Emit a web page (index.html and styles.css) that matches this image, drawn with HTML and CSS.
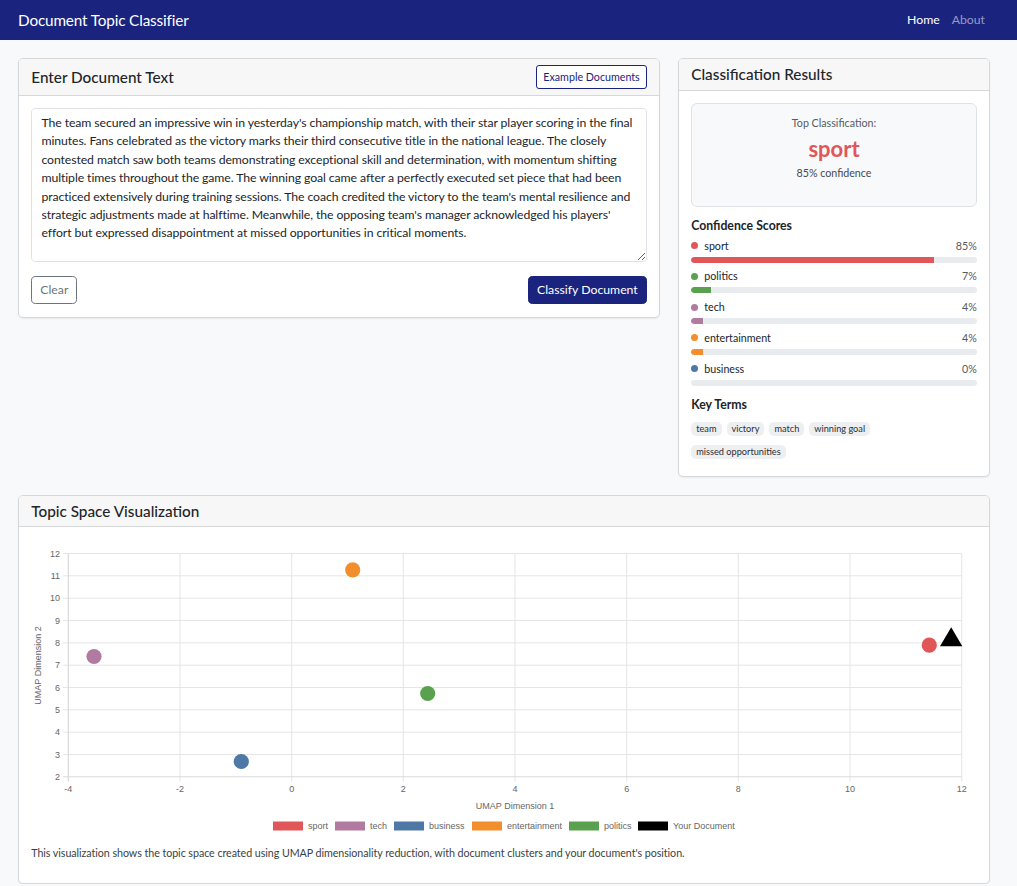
FILE: index.html
```html
<!DOCTYPE html>
<html lang="en">
<head>
<meta charset="utf-8">
<title>Document Topic Classifier</title>
<link rel="stylesheet" href="styles.css">
</head>
<body>
<nav class="navbar">
  <span class="brand">Document Topic Classifier</span>
  <div class="nav-links">
    <a class="nav-link active">Home</a>
    <a class="nav-link">About</a>
  </div>
</nav>
<main class="main">
  <div class="top-row">
    <section class="card">
      <div class="card-header tall">
        <h5 class="card-title">Enter Document Text</h5>
        <button class="btn-sm-outline">Example Documents</button>
      </div>
      <div class="card-body">
        <textarea class="doc-input" rows="8">The team secured an impressive win in yesterday's championship match, with their star player scoring in the final minutes. Fans celebrated as the victory marks their third consecutive title in the national league. The closely contested match saw both teams demonstrating exceptional skill and determination, with momentum shifting multiple times throughout the game. The winning goal came after a perfectly executed set piece that had been practiced extensively during training sessions. The coach credited the victory to the team's mental resilience and strategic adjustments made at halftime. Meanwhile, the opposing team's manager acknowledged his players' effort but expressed disappointment at missed opportunities in critical moments.</textarea>
        <div class="actions">
          <button class="btn btn-clear">Clear</button>
          <button class="btn btn-primary">Classify Document</button>
        </div>
      </div>
    </section>
    <section class="card">
      <div class="card-header">
        <h5 class="card-title">Classification Results</h5>
      </div>
      <div class="card-body">
        <div class="top-box">
          <p class="top-label">Top Classification:</p>
          <h3 class="top-class">sport</h3>
          <p class="top-conf">85% confidence</p>
        </div>
        <h6 class="sub-title">Confidence Scores</h6>
        <div class="scores">
          <div class="score">
            <div class="score-line"><span class="score-name"><i class="dot c-sport"></i>sport</span><span class="score-pct">85%</span></div>
            <div class="bar"><div class="fill c-sport" style="width:85%"></div></div>
          </div>
          <div class="score">
            <div class="score-line"><span class="score-name"><i class="dot c-politics"></i>politics</span><span class="score-pct">7%</span></div>
            <div class="bar"><div class="fill c-politics" style="width:7%"></div></div>
          </div>
          <div class="score">
            <div class="score-line"><span class="score-name"><i class="dot c-tech"></i>tech</span><span class="score-pct">4%</span></div>
            <div class="bar"><div class="fill c-tech" style="width:4%"></div></div>
          </div>
          <div class="score">
            <div class="score-line"><span class="score-name"><i class="dot c-ent"></i>entertainment</span><span class="score-pct">4%</span></div>
            <div class="bar"><div class="fill c-ent" style="width:4%"></div></div>
          </div>
          <div class="score">
            <div class="score-line"><span class="score-name"><i class="dot c-business"></i>business</span><span class="score-pct">0%</span></div>
            <div class="bar"><div class="fill c-business" style="width:0%"></div></div>
          </div>
        </div>
        <h6 class="sub-title terms-title">Key Terms</h6>
        <div class="tags">
          <span class="tag">team</span>
          <span class="tag">victory</span>
          <span class="tag">match</span>
          <span class="tag">winning goal</span>
          <span class="tag">missed opportunities</span>
        </div>
      </div>
    </section>
  </div>
  <section class="card viz-card">
    <div class="card-header">
      <h5 class="card-title">Topic Space Visualization</h5>
    </div>
    <div class="card-body">
      <svg class="chart" width="946" height="297" viewBox="0 1.5 946 297" xmlns="http://www.w3.org/2000/svg">
        <g class="grid" stroke="#e5e5e5" stroke-width="1">
          <line x1="37.3" y1="15" x2="37.3" y2="243"/>
          <line x1="149" y1="15" x2="149" y2="243"/>
          <line x1="260.7" y1="15" x2="260.7" y2="243"/>
          <line x1="372.3" y1="15" x2="372.3" y2="243"/>
          <line x1="484" y1="15" x2="484" y2="243"/>
          <line x1="595.7" y1="15" x2="595.7" y2="243"/>
          <line x1="707.3" y1="15" x2="707.3" y2="243"/>
          <line x1="819" y1="15" x2="819" y2="243"/>
          <line x1="930.7" y1="15" x2="930.7" y2="243"/>
          <line x1="32" y1="15" x2="930.7" y2="15"/>
          <line x1="32" y1="37.3" x2="930.7" y2="37.3"/>
          <line x1="32" y1="59.7" x2="930.7" y2="59.7"/>
          <line x1="32" y1="82" x2="930.7" y2="82"/>
          <line x1="32" y1="104.3" x2="930.7" y2="104.3"/>
          <line x1="32" y1="126.7" x2="930.7" y2="126.7"/>
          <line x1="32" y1="149" x2="930.7" y2="149"/>
          <line x1="32" y1="171.3" x2="930.7" y2="171.3"/>
          <line x1="32" y1="193.7" x2="930.7" y2="193.7"/>
          <line x1="32" y1="216" x2="930.7" y2="216"/>
        </g>
        <g stroke="#d9d9d9" stroke-width="1">
          <line x1="32" y1="238.3" x2="930.7" y2="238.3"/>
          <line x1="37.3" y1="15" x2="37.3" y2="243"/>
        </g>
        <g class="ticks" font-family="Liberation Sans, Arial, sans-serif" font-size="9" fill="#666" text-anchor="end">
          <text x="29" y="18.2">12</text>
          <text x="29" y="40.5">11</text>
          <text x="29" y="62.9">10</text>
          <text x="29" y="85.2">9</text>
          <text x="29" y="107.5">8</text>
          <text x="29" y="129.9">7</text>
          <text x="29" y="152.2">6</text>
          <text x="29" y="174.5">5</text>
          <text x="29" y="196.9">4</text>
          <text x="29" y="219.2">3</text>
          <text x="29" y="241.5">2</text>
        </g>
        <g class="ticks" font-family="Liberation Sans, Arial, sans-serif" font-size="9" fill="#666" text-anchor="middle">
          <text x="37.3" y="253.2">-4</text>
          <text x="149" y="253.2">-2</text>
          <text x="260.7" y="253.2">0</text>
          <text x="372.3" y="253.2">2</text>
          <text x="484" y="253.2">4</text>
          <text x="595.7" y="253.2">6</text>
          <text x="707.3" y="253.2">8</text>
          <text x="819" y="253.2">10</text>
          <text x="930.7" y="253.2">12</text>
          <text x="484" y="270.2">UMAP Dimension 1</text>
          <text transform="translate(10.3 127) rotate(-90)">UMAP Dimension 2</text>
        </g>
        <g class="points">
          <circle cx="898.3" cy="106.7" r="7.6" fill="#e15759"/>
          <circle cx="63" cy="118" r="7.6" fill="#b07aa1"/>
          <circle cx="210.3" cy="223" r="7.6" fill="#4e79a7"/>
          <circle cx="321.7" cy="31.3" r="7.6" fill="#f28e2b"/>
          <circle cx="396.7" cy="155" r="7.6" fill="#59a14f"/>
          <polygon points="909,107.7 931.3,107.7 920.2,88.7" fill="#000"/>
        </g>
        <g class="legend" font-family="Liberation Sans, Arial, sans-serif" font-size="9" fill="#666">
          <rect x="242" y="283" width="30" height="9" fill="#e15759"/>
          <text x="277" y="290.7">sport</text>
          <rect x="304" y="283" width="30" height="9" fill="#b07aa1"/>
          <text x="339" y="290.7">tech</text>
          <rect x="363" y="283" width="30" height="9" fill="#4e79a7"/>
          <text x="398" y="290.7">business</text>
          <rect x="441" y="283" width="30" height="9" fill="#f28e2b"/>
          <text x="476" y="290.7">entertainment</text>
          <rect x="538" y="283" width="30" height="9" fill="#59a14f"/>
          <text x="573" y="290.7">politics</text>
          <rect x="607" y="283" width="30" height="9" fill="#000"/>
          <text x="642" y="290.7">Your Document</text>
        </g>
      </svg>
      <p class="caption">This visualization shows the topic space created using UMAP dimensionality reduction, with document clusters and your document's position.</p>
    </div>
  </section>
</main>
</body>
</html>
```

FILE: styles.css
```css
* { box-sizing: border-box; }

body {
  margin: 0;
  background: #f8f9fa;
  font-family: Lato, "Noto Sans", sans-serif;
  font-size: 12.25px;
  line-height: 1.5;
  color: #212529;
}

.navbar {
  height: 40px;
  background: #1a237e;
  display: flex;
  align-items: center;
  justify-content: space-between;
  padding: 0 26px 0 18px;
}

.brand {
  color: #fff;
  font-size: 15.3px;
  line-height: 1.2;
  letter-spacing: -0.15px;
}

.nav-links { display: flex; }

.nav-link {
  padding: 0 6px;
  color: rgba(255, 255, 255, 0.55);
  font-size: 12.25px;
}

.nav-link.active { color: #fff; }

.main { padding: 18px 27px 0 18px; }

.top-row {
  display: grid;
  grid-template-columns: minmax(0, 642fr) minmax(0, 312fr);
  gap: 18px;
  align-items: start;
}

.card {
  background: #fff;
  border: 1px solid #d5d7d9;
  border-radius: 5px;
  box-shadow: 0 1px 2px rgba(0, 0, 0, 0.06);
  overflow: hidden;
}

.card-header {
  background: #f7f7f7;
  border-bottom: 1px solid #d5d7d9;
  padding: 6.1px 12.25px;
  display: flex;
  justify-content: space-between;
  align-items: center;
}

.card-title {
  margin: 0;
  font-size: 15.3px;
  font-weight: 500;
  line-height: 1.2;
}

.card-body { padding: 12.25px; }

.btn-sm-outline {
  font: inherit;
  font-size: 10.7px;
  line-height: 16px;
  padding: 3px 6px;
  border: 1px solid #1a237e;
  border-radius: 3px;
  background: #fff;
  color: #1a237e;
}

.doc-input {
  display: block;
  width: 100%;
  font: inherit;
  font-size: 12.25px;
  line-height: 18.375px;
  letter-spacing: -0.09px;
  color: #212529;
  padding: 4.6px 9.2px;
  border: 1px solid #dee2e6;
  border-radius: 4.6px;
  height: 154px;
  resize: vertical;
}

.actions {
  margin-top: 14px;
  display: flex;
  justify-content: space-between;
}

.btn {
  font: inherit;
  font-size: 12.25px;
  line-height: 18.4px;
  padding: 3.8px 8px;
  border-radius: 4.6px;
  border: 1px solid transparent;
}

.btn-clear {
  background: #fff;
  border-color: #6c757d;
  color: #6c757d;
}

.btn-primary {
  background: #1a237e;
  border-color: #1a237e;
  color: #fff;
}

.top-box {
  background: #f8f9fa;
  border: 1px solid #dee2e6;
  border-radius: 6px;
  padding: 12.25px 12.25px 26px;
  text-align: center;
  margin-bottom: 12.25px;
}

.top-label {
  margin: 0;
  font-size: 10.7px;
  line-height: 14px;
  color: #555b61;
}

.top-class {
  margin: 5.75px 0 4px;
  font-size: 22px;
  line-height: 26px;
  font-weight: 700;
  color: #e15759;
}

.top-conf {
  margin: 0;
  font-size: 10.7px;
  line-height: 14px;
  color: #444a50;
}

.sub-title {
  margin: 0 0 4px;
  font-size: 12.25px;
  line-height: 14.7px;
  font-weight: 700;
}

.scores {
  display: flex;
  flex-direction: column;
  gap: 5.75px;
  margin-bottom: 12.3px;
}

.score-line {
  display: flex;
  justify-content: space-between;
  font-size: 10.7px;
  line-height: 16px;
}

.score-name { display: flex; align-items: center; }

.score-pct { color: #555b61; }

.dot {
  width: 7px;
  height: 7px;
  border-radius: 50%;
  margin: 0 6px 0 0;
}

.bar {
  margin-top: 3px;
  height: 6px;
  border-radius: 3px;
  background: #e9ecef;
  overflow: hidden;
}

.fill { height: 100%; border-radius: 3px 0 0 3px; }

.c-sport { background: #e15759; }
.c-politics { background: #59a14f; }
.c-tech { background: #b07aa1; }
.c-ent { background: #f28e2b; }
.c-business { background: #4e79a7; }

.terms-title { margin-bottom: 9.4px; }

.tags {
  display: flex;
  flex-wrap: wrap;
  gap: 8.6px 5px;
  margin-bottom: 4.8px;
  padding-right: 24px;
}

.tag {
  background: #eeeff1;
  color: #2a2e33;
  font-size: 9.2px;
  line-height: 10px;
  padding: 2px 5px;
  border-radius: 5px;
}

.viz-card { margin-top: 18px; }

.chart { display: block; }

.caption {
  margin: 8px 0 10px;
  font-size: 10.7px;
  line-height: 16px;
  letter-spacing: -0.05px;
  color: #3a3f44;
}
```
